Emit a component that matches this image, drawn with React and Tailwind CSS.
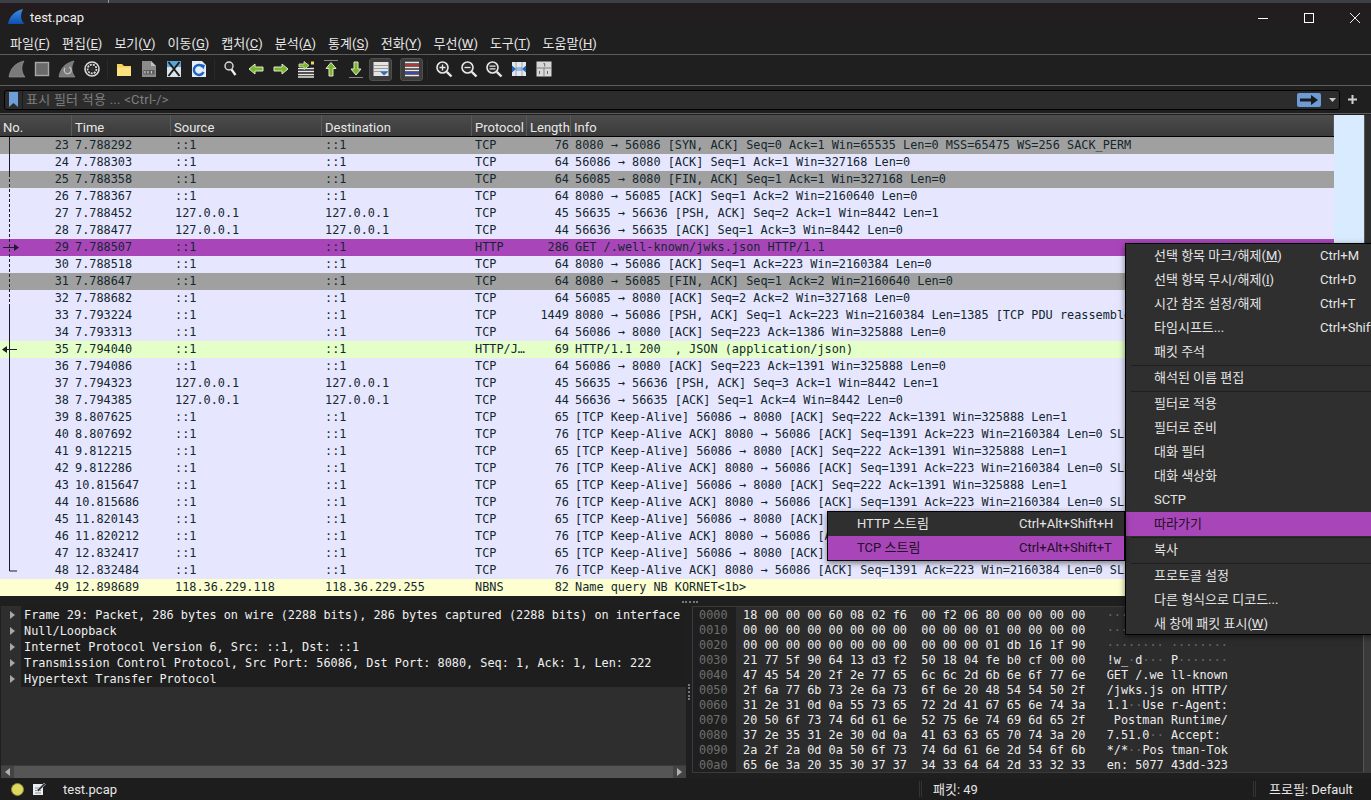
import React from "react";

const TXT = "[font-family:'Roboto','Noto_Sans_CJK_KR',sans-serif]";
const MONO = "[font-family:'DejaVu_Sans_Mono',monospace]";

const K1 = "[TCP Keep-Alive] 56086 → 8080 [ACK] Seq=222 Ack=1391 Win=325888 Len=1";
const K2 = "[TCP Keep-Alive ACK] 8080 → 56086 [ACK] Seq=1391 Ack=223 Win=2160384 Len=0 SLE=222 SRE=223";
const L = "127.0.0.1";
const rows = [
  [23, "7.788292", "::1", "::1", "TCP", 76, "8080 → 56086 [SYN, ACK] Seq=0 Ack=1 Win=65535 Len=0 MSS=65475 WS=256 SACK_PERM", "g"],
  [24, "7.788303", "::1", "::1", "TCP", 64, "56086 → 8080 [ACK] Seq=1 Ack=1 Win=327168 Len=0", "t"],
  [25, "7.788358", "::1", "::1", "TCP", 64, "56085 → 8080 [FIN, ACK] Seq=1 Ack=1 Win=327168 Len=0", "g"],
  [26, "7.788367", "::1", "::1", "TCP", 64, "8080 → 56085 [ACK] Seq=1 Ack=2 Win=2160640 Len=0", "t"],
  [27, "7.788452", L, L, "TCP", 45, "56635 → 56636 [PSH, ACK] Seq=2 Ack=1 Win=8442 Len=1", "t"],
  [28, "7.788477", L, L, "TCP", 44, "56636 → 56635 [ACK] Seq=1 Ack=3 Win=8442 Len=0", "t"],
  [29, "7.788507", "::1", "::1", "HTTP", 286, "GET /.well-known/jwks.json HTTP/1.1", "p"],
  [30, "7.788518", "::1", "::1", "TCP", 64, "8080 → 56086 [ACK] Seq=1 Ack=223 Win=2160384 Len=0", "t"],
  [31, "7.788647", "::1", "::1", "TCP", 64, "8080 → 56085 [FIN, ACK] Seq=1 Ack=2 Win=2160640 Len=0", "g"],
  [32, "7.788682", "::1", "::1", "TCP", 64, "56085 → 8080 [ACK] Seq=2 Ack=2 Win=327168 Len=0", "t"],
  [33, "7.793224", "::1", "::1", "TCP", 1449, "8080 → 56086 [PSH, ACK] Seq=1 Ack=223 Win=2160384 Len=1385 [TCP PDU reassembled in 35]", "t"],
  [34, "7.793313", "::1", "::1", "TCP", 64, "56086 → 8080 [ACK] Seq=223 Ack=1386 Win=325888 Len=0", "t"],
  [35, "7.794040", "::1", "::1", "HTTP/J…", 69, "HTTP/1.1 200  , JSON (application/json)", "h"],
  [36, "7.794086", "::1", "::1", "TCP", 64, "56086 → 8080 [ACK] Seq=223 Ack=1391 Win=325888 Len=0", "t"],
  [37, "7.794323", L, L, "TCP", 45, "56635 → 56636 [PSH, ACK] Seq=3 Ack=1 Win=8442 Len=1", "t"],
  [38, "7.794385", L, L, "TCP", 44, "56636 → 56635 [ACK] Seq=1 Ack=4 Win=8442 Len=0", "t"],
  [39, "8.807625", "::1", "::1", "TCP", 65, K1, "t"],
  [40, "8.807692", "::1", "::1", "TCP", 76, K2, "t"],
  [41, "9.812215", "::1", "::1", "TCP", 65, K1, "t"],
  [42, "9.812286", "::1", "::1", "TCP", 76, K2, "t"],
  [43, "10.815647", "::1", "::1", "TCP", 65, K1, "t"],
  [44, "10.815686", "::1", "::1", "TCP", 76, K2, "t"],
  [45, "11.820143", "::1", "::1", "TCP", 65, K1, "t"],
  [46, "11.820212", "::1", "::1", "TCP", 76, K2, "t"],
  [47, "12.832417", "::1", "::1", "TCP", 65, K1, "t"],
  [48, "12.832484", "::1", "::1", "TCP", 76, K2, "t"],
  [49, "12.898689", "118.36.229.118", "118.36.229.255", "NBNS", 82, "Name query NB KORNET<1b>", "y"],
];

const rowBg = { g: "bg-[#a0a0a0]", t: "bg-[#e7e6ff]", p: "bg-[#a846b9]", h: "bg-[#e4ffc7]", y: "bg-[#feffd0]" };

const hex = [
  ["0000", "18 00 00 00 60 08 02 f6", "00 f2 06 80 00 00 00 00", "········ ········"],
  ["0010", "00 00 00 00 00 00 00 00", "00 00 00 01 00 00 00 00", "········ ········"],
  ["0020", "00 00 00 00 00 00 00 00", "00 00 00 01 db 16 1f 90", "········ ········"],
  ["0030", "21 77 5f 90 64 13 d3 f2", "50 18 04 fe b0 cf 00 00", "!w_·d··· P·······"],
  ["0040", "47 45 54 20 2f 2e 77 65", "6c 6c 2d 6b 6e 6f 77 6e", "GET /.we ll-known"],
  ["0050", "2f 6a 77 6b 73 2e 6a 73", "6f 6e 20 48 54 54 50 2f", "/jwks.js on HTTP/"],
  ["0060", "31 2e 31 0d 0a 55 73 65", "72 2d 41 67 65 6e 74 3a", "1.1··Use r-Agent:"],
  ["0070", "20 50 6f 73 74 6d 61 6e", "52 75 6e 74 69 6d 65 2f", " Postman Runtime/"],
  ["0080", "37 2e 35 31 2e 30 0d 0a", "41 63 63 65 70 74 3a 20", "7.51.0·· Accept: "],
  ["0090", "2a 2f 2a 0d 0a 50 6f 73", "74 6d 61 6e 2d 54 6f 6b", "*/*··Pos tman-Tok"],
  ["00a0", "65 6e 3a 20 35 30 37 37", "34 33 64 64 2d 33 32 33", "en: 5077 43dd-323"],
];

const details = [
  "Frame 29: Packet, 286 bytes on wire (2288 bits), 286 bytes captured (2288 bits) on interface",
  "Null/Loopback",
  "Internet Protocol Version 6, Src: ::1, Dst: ::1",
  "Transmission Control Protocol, Src Port: 56086, Dst Port: 8080, Seq: 1, Ack: 1, Len: 222",
  "Hypertext Transfer Protocol",
];

function Mn({ a, m, b = ")" }) {
  return (
    <span className="whitespace-pre">
      {a}(<span className="underline">{m}</span>{b}
    </span>
  );
}

const menus = [["파일", "F"], ["편집", "E"], ["보기", "V"], ["이동", "G"], ["캡처", "C"], ["분석", "A"], ["통계", "S"], ["전화", "Y"], ["무선", "W"], ["도구", "T"], ["도움말", "H"]];

function Ic({ children }) {
  return (
    <svg width="20" height="20" viewBox="0 0 20 20" fill="none">
      {children}
    </svg>
  );
}

const Fin = ({ fill = "#7a7a7a" }) => <path d="M2 18C3 10 8 4 17 2C14 7 14 13 18 18Z" fill={fill} stroke="#9a9a9a" strokeWidth=".6" />;
const Mag = ({ children }) => (
  <Ic>
    <circle cx="8.5" cy="8.5" r="5.5" fill="#2a2a2a" stroke="#e8e8e8" strokeWidth="1.6" />
    <path d="M12.8 12.8L17.5 17.5" stroke="#e8e8e8" strokeWidth="2.4" />
    {children}
  </Ic>
);

const icons = {
  shark: <Ic><Fin /></Ic>,
  stop: <Ic><rect x="3.5" y="3.5" width="13" height="13" fill="#6a6a6a" stroke="#a8a8a8" strokeWidth="1.4" /></Ic>,
  restart: <Ic><Fin /><path d="M12 8a3.5 3.5 0 1 1-4 1" stroke="#c8c8c8" strokeWidth="1.2" /></Ic>,
  options: <Ic><circle cx="10" cy="10" r="7" fill="#222" stroke="#d8d8d8" strokeWidth="1.6" /><circle cx="10" cy="10" r="4.4" stroke="#d8d8d8" strokeWidth="1.8" strokeDasharray="2 1" /><circle cx="10" cy="10" r="2" fill="#333" /></Ic>,
  folder: <Ic><path d="M3 5h5l2 2h7v10H3Z" fill="#f8cf5a" /><path d="M3 8.5h14v8.5H3Z" fill="#fde07f" /></Ic>,
  file: <Ic><path d="M3 2h9l5 5v11H3Z" fill="#8b8b8b" /><path d="M12 2v5h5Z" fill="#c0c0c0" /><rect x="4.5" y="11" width="11" height="4.5" fill="#5b5b5b" /><path d="M6 12v2.5M9 12v2.5M12.5 12v2.5" stroke="#ccc" strokeWidth="1.2" /></Ic>,
  close: <Ic><path d="M3 2h14v16H3Z" fill="#d8e4ea" /><path d="M3 2h14v6H3Z" fill="#5aa5d6" /><path d="M4.5 3L15.5 17M15.5 3L4.5 17" stroke="#1c1c1c" strokeWidth="2" /></Ic>,
  reload: <Ic><path d="M3 2h10l4 4v12H3Z" fill="#e4ecf4" /><path d="M14 8a5 5 0 1 0 .5 5" stroke="#1b62c4" strokeWidth="2.4" /><path d="M11.5 5l4.5 1-1.5 4.5Z" fill="#1b62c4" /></Ic>,
  search: <Ic><circle cx="8" cy="7" r="4" fill="#2b2b2b" stroke="#ddd" strokeWidth="1.4" /><path d="M10.5 10.5L14.5 16" stroke="#f2f2f2" strokeWidth="2.2" /></Ic>,
  back: <Ic><path d="M3 10l6-5v3h8v4H9v3Z" fill="#76b82a" stroke="#e6e6d0" strokeWidth="1" /></Ic>,
  fwd: <Ic><path d="M17 10l-6-5v3H3v4h8v3Z" fill="#76b82a" stroke="#e6e6d0" strokeWidth="1" /></Ic>,
  goto: <Ic><path d="M2 9.5h16M2 12.5h16M2 15.5h16M2 18h16" stroke="#e8e8e8" strokeWidth="1.3" /><path d="M2 3h12v6H2Z" fill="#222" /><path d="M13 6.5l-5-4V5H3v3h5v2.5Z" fill="#76b82a" stroke="#e6e6d0" strokeWidth=".8" /><rect x="15" y="2.5" width="3" height="3" fill="#f4d95c" /></Ic>,
  top: <Ic><path d="M3 1.5h14" stroke="#888" strokeWidth="1" /><path d="M10 3.5l5 6h-3V17H8V9.5H5Z" fill="#76b82a" stroke="#e6e6d0" strokeWidth="1" /></Ic>,
  bottom: <Ic><path d="M3 18.5h14" stroke="#888" strokeWidth="1" /><path d="M10 16l5-6h-3V3H8v7H5Z" fill="#76b82a" stroke="#e6e6d0" strokeWidth="1" /></Ic>,
  auto: <Ic><rect x="2.5" y="3" width="15" height="14" fill="#e4e4e4" /><path d="M2.5 6.5h15M2.5 9.5h15M2.5 12.5h15" stroke="#888" strokeWidth=".8" /><path d="M9 12.5h8.5L13 16.5Z" fill="#2c6fc0" /></Ic>,
  color: <Ic><path d="M3 3.500h14M3 8.500h14M3 16.500h14" stroke="#ececec" strokeWidth="1.6" /><path d="M3 6h14" stroke="#e03a3a" strokeWidth="1.4" /><path d="M3 11.500h14" stroke="#ececec" strokeWidth="1.4" /><path d="M3 14h14" stroke="#4a4ad8" strokeWidth="1.4" /></Ic>,
  zin: <Mag><path d="M5.5 8.5h6M8.5 5.5v6" stroke="#e8e8e8" strokeWidth="1.3" /></Mag>,
  zout: <Mag><path d="M5.5 8.5h6" stroke="#e8e8e8" strokeWidth="1.3" /></Mag>,
  zreset: <Mag><path d="M5.5 7.2h6M5.5 9.8h6" stroke="#e8e8e8" strokeWidth="1.3" /></Mag>,
  resize: <Ic><rect x="3" y="3" width="14" height="14" fill="#e4e8ee" /><path d="M7 3v14M13 3v14" stroke="#9aa4b0" strokeWidth="1" /><path d="M3 6.5l4 3.5-4 3.5ZM17 6.5l-4 3.5 4 3.5Z" fill="#1f66b8" /><path d="M7 8h6v4H7Z" fill="#1f66b8" opacity=".35" /></Ic>,
  cols: <Ic><rect x="2.5" y="2.5" width="15" height="15" fill="#d8d8d8" /><path d="M2.5 9h15M10 9v8.5" stroke="#808080" strokeWidth="1" /><path d="M9.5 4.5h1.2v3M5.5 12v3M13.5 12v3" stroke="#666" strokeWidth="1" /></Ic>,
};

const Cell = ({ n }) => <div className="w-[25px] h-[24px] flex items-center justify-center">{icons[n]}</div>;
const Sep = () => <div className="w-[7px] h-[20px] flex justify-center"><div className="w-px h-full bg-[#2a2a2a]" /></div>;
const Boxed = ({ n }) => (
  <div className="w-[23px] h-[23px] mx-px flex items-center justify-center bg-[#3d3d3d] border border-[#4f4f4f] rounded-[3px]">{icons[n]}</div>
);

const Div = () => <div className="h-[2px] mx-[5px] border-b border-[#1f1f1f]" />;

function MI({ children, sc, active }) {
  return (
    <div className={`h-[24px] flex items-center pl-[28px] whitespace-pre ${active ? "bg-[#a846b9] text-[#1d0f22]" : ""}`}>
      <span className="w-[166px] shrink-0">{children}</span>
      {sc && <span>{sc}</span>}
    </div>
  );
}

function Dim({ text }) {
  return text.split(/(·+)/).map((s, i) => (
    <span key={i} className={s[0] === "·" ? "text-[#6a6a6a]" : ""}>{s}</span>
  ));
}

const cols = [
  ["No.", "w-[72px]"], ["Time", "w-[99px]"], ["Source", "w-[151px]"], ["Destination", "w-[150px]"],
  ["Protocol", "w-[55px]"], ["Length", "w-[44px]"], ["Info", "flex-1"],
];

export default function App() {
  return (
    <div className={`relative w-[1371px] h-[800px] overflow-hidden flex flex-col bg-[#1f1f1f] text-[#e6e6e6] text-[13px] ${TXT}`}>
      {/* background window sliver */}
      <div className="h-[3px] shrink-0 overflow-hidden bg-[#3a4046] text-[#d8d8d8] text-[12px] leading-[16px]">
        <div className="-mt-[13px] flex whitespace-pre">
          <span className="w-[108px] shrink-0">관계자료부탁</span>
          <span className="w-[11px] border-l border-[#999] shrink-0" />
          <span>오늘의 사이트</span>
        </div>
      </div>
      {/* title bar */}
      <div className="h-[29px] shrink-0 flex items-center bg-gradient-to-b from-[#241c1e] to-[#1f1f1f]">
        <svg className="ml-[8px]" width="17" height="17" viewBox="0 0 17 17">
          <defs>
            <linearGradient id="lg" x1="0" y1="0" x2="0" y2="1">
              <stop offset="0" stopColor="#3f8ee8" />
              <stop offset="1" stopColor="#0d4fb0" />
            </linearGradient>
          </defs>
          <path d="M0 15C1 8 6 2 15 0C12 6 12.5 11 16.5 15Z" fill="url(#lg)" />
        </svg>
        <span className="ml-[5px] text-[#f0f0f0]">test.pcap</span>
        <div className="ml-auto flex items-center pr-[11px]">
          <svg width="10" height="10" viewBox="0 0 10 10" className="mr-[36px]"><path d="M0 5.5h10" stroke="#fff" /></svg>
          <svg width="10" height="10" viewBox="0 0 10 10" className="mr-[36px]"><rect x=".5" y=".5" width="9" height="9" fill="none" stroke="#fff" /></svg>
          <svg width="10" height="10" viewBox="0 0 10 10"><path d="M0 0l10 10M10 0L0 10" stroke="#eee" /></svg>
        </div>
      </div>
      {/* menu */}
      <div className="h-[23px] shrink-0 flex items-center gap-[12px] pl-[10px] pt-px border-b border-[#5c5c5c]">
        {menus.map(([a, m]) => <Mn key={m} a={a} m={m} />)}
      </div>
      {/* toolbar */}
      <div className="h-[31px] shrink-0 flex items-center pl-[4px] pb-[2px] border-b border-[#5c5c5c]">
        <Cell n="shark" /><Cell n="stop" /><Cell n="restart" /><Cell n="options" /><Sep />
        <Cell n="folder" /><Cell n="file" /><Cell n="close" /><Cell n="reload" /><Sep />
        <Cell n="search" /><Cell n="back" /><Cell n="fwd" /><Cell n="goto" /><Cell n="top" /><Cell n="bottom" />
        <Boxed n="auto" /><div className="w-[6px]" /><Boxed n="color" /><Sep />
        <Cell n="zin" /><Cell n="zout" /><Cell n="zreset" /><Cell n="resize" /><Cell n="cols" />
      </div>
      {/* filter */}
      <div className="h-[28px] shrink-0 flex items-center pl-[4px] border-b border-[#5c5c5c]">
        <div className="w-[1336px] h-[20px] flex items-center bg-[#2c2c2c] border border-black rounded-[3px]">
          <svg className="ml-[4px]" width="9" height="15" viewBox="0 0 9 15"><path d="M0 0h9v15L4.5 11 0 15Z" fill="#6f9fd8" /></svg>
          <div className="w-px h-full ml-[4px] bg-[#1a1a1a]" />
          <span className="ml-[3px] text-[#7f7f7f] tracking-[.25px] whitespace-pre">표시 필터 적용 ... &lt;Ctrl-/&gt;</span>
          <div className="ml-auto mr-[18px] w-[24px] h-[14px] rounded-[2px] bg-[#6c9bd6] flex items-center justify-center">
            <svg width="18" height="10" viewBox="0 0 18 10"><path d="M0 3.5h11V0l7 5-7 5V6.5H0Z" fill="#1a1a1a" /></svg>
          </div>
        </div>
        <svg className="ml-[-11px]" width="7" height="4" viewBox="0 0 7 4"><path d="M0 0h7L3.5 4Z" fill="#c8c8c8" /></svg>
        <svg className="ml-[12px]" width="9" height="9" viewBox="0 0 9 9"><path d="M4.5 0v9M0 4.5h9" stroke="#d0d0d0" strokeWidth="2" /></svg>
      </div>
      {/* packet list */}
      <div className="h-[481px] mt-px shrink-0 flex">
        <div className="relative w-[1334px] shrink-0 flex flex-col overflow-hidden">
          <div className="h-[22px] shrink-0 flex items-center bg-gradient-to-b from-[#4c4c4c] to-[#3b3b3b] border-b border-black text-[#e8e8e8]">
            {cols.map(([t, w]) => (
              <div key={t} className={`${w} h-full flex items-center pl-[3px] pt-[4px] border-r border-[#5a5a5a] overflow-hidden whitespace-pre`}>{t}</div>
            ))}
          </div>
          <div className={`flex flex-col text-[11.85px] text-[#12272e] ${MONO}`}>
            {rows.map(([no, t, s, d, p, l, info, k]) => (
              <div key={no} className={`h-[17px] leading-[17px] flex whitespace-pre ${rowBg[k]}`}>
                <div className="w-[72px] pr-[3px] text-right shrink-0">{no}</div>
                <div className="w-[99px] pl-[3px] shrink-0">{t}</div>
                <div className="w-[151px] pl-[4px] shrink-0">{s}</div>
                <div className="w-[150px] pl-[3px] shrink-0">{d}</div>
                <div className="w-[55px] pl-[3px] shrink-0">{p}</div>
                <div className="w-[44px] pr-[2px] text-right shrink-0">{l}</div>
                <div className="flex-1 pl-[4px] overflow-hidden">{info}</div>
              </div>
            ))}
          </div>
          <svg className="absolute left-0 top-[22px]" width="24" height="459" viewBox="0 0 24 459">
            <path d="M9.5 0V37" stroke="#1c1c2a" fill="none" />
            <path d="M9.5 37V170" stroke="#1c1c2a" strokeDasharray="3 2" fill="none" />
            <path d="M9.5 170V434H17" stroke="#1c1c2a" fill="none" />
            <path d="M3 110.5H15" stroke="#1c1c2a" fill="none" />
            <path d="M14 107l5 3.5-5 3.5Z" fill="#1c1c2a" />
            <path d="M7 212.5H17" stroke="#1c1c2a" fill="none" />
            <path d="M7 209l-5 3.5 5 3.5Z" fill="#1c1c2a" />
          </svg>
        </div>
        <div className="w-[30px] bg-[#d8ebff] shrink-0" />
        <div className="flex-1 bg-[#2e2e2e] border-l border-[#555]" />
      </div>
      {/* splitter */}
      <div className="h-[10px] shrink-0 flex justify-center items-start pt-[5px] pl-[9px]">
        <div className="w-[16px] h-[2px] border-t-2 border-dotted border-[#777]" />
      </div>
      {/* bottom panes */}
      <div className="h-[172px] shrink-0 flex">
        <div className="w-[686px] shrink-0 flex flex-col pl-px">
          <div className="h-[159px] flex bg-[#2e2e2e]">
            <div className="w-[20px] shrink-0 flex flex-col pt-px">
              {details.map((d) => (
                <div key={d} className="h-[16px] pl-[9px] flex items-center">
                  <svg width="5" height="8" viewBox="0 0 5 8"><path d="M0 0l5 4-5 4Z" fill="#a8a8a8" /></svg>
                </div>
              ))}
            </div>
            <div className={`w-[665px] h-[81px] bg-[#1e1e1e] pl-[3px] pt-px text-[11.85px] text-[#efefef] ${MONO}`}>
              {details.map((d) => <div key={d} className="h-[16px] leading-[16px] whitespace-pre overflow-hidden">{d}</div>)}
            </div>
          </div>
          <div className="h-[13px] flex bg-[#555] border-t border-[#3a3a3a]">
            <div className="w-[13px] bg-[#444] flex items-center justify-center">
              <svg width="5" height="8" viewBox="0 0 5 8"><path d="M5 0L0 4l5 4Z" fill="#b0b0b0" /></svg>
            </div>
            <div className="flex-1" />
            <div className="w-[13px] bg-[#444] flex items-center justify-center">
              <svg width="5" height="8" viewBox="0 0 5 8"><path d="M0 0l5 4-5 4Z" fill="#b0b0b0" /></svg>
            </div>
          </div>
        </div>
        <div className="w-[6px] shrink-0 flex items-center justify-center">
          <div className="w-[2px] h-[16px] border-l-2 border-dotted border-[#777]" />
        </div>
        <div className={`flex-1 flex h-[167px] border border-[#3a3a3a] text-[11.85px] ${MONO}`}>
          <div className="w-[43px] shrink-0 pl-[6px] pt-[1px] bg-[#1f1f1f] text-[#6f6f6f]">
            {hex.map((r) => <div key={r[0]} className="h-[15px] leading-[15px]">{r[0]}</div>)}
          </div>
          <div className="flex-1 bg-[#2c2c2c] pt-[1px] pl-[7px] text-[#ececec]">
            {hex.map((r) => (
              <div key={r[0]} className="h-[15px] leading-[15px] whitespace-pre">
                {r[1]}  {r[2]}   <Dim text={r[3]} />
              </div>
            ))}
          </div>
          <div className="w-[7px] bg-[#3a3a3a] border-l border-[#555]" />
        </div>
      </div>
      {/* status bar */}
      <div className="h-[22px] shrink-0 flex items-center bg-[#1d1d1d]">
        <div className="ml-[11px] w-[13px] h-[13px] rounded-full bg-[#dcd860] border border-[#8d8a3a]" />
        <svg className="ml-[8px]" width="14" height="14" viewBox="0 0 14 14">
          <rect x="1" y="2" width="10" height="11" fill="#e8eef4" />
          <path d="M3 6h6M3 8.5h6M3 11h6" stroke="#8a8f96" />
          <path d="M5 8L12 1l1.5 1.5L6.5 9.5Z" fill="#3a3a3a" stroke="#cfcfcf" strokeWidth=".5" />
        </svg>
        <span className="ml-[17px] pt-[2px]">test.pcap</span>
        <div className="ml-auto flex items-center h-full">
          <div className="w-[3px] h-[16px] border-x border-[#333]" />
          <span className="w-[331px] pl-[11px] pt-[2px]">패킷: 49</span>
          <div className="w-[3px] h-[16px] border-x border-[#333]" />
          <span className="w-[115px] pl-[13px] pt-[2px] whitespace-pre">프로필: Default</span>
        </div>
      </div>

      {/* context menu */}
      <div className="absolute left-[1125px] top-[243px] w-[260px] h-[392px] overflow-hidden bg-[#2f2f2f] border border-black text-[#e4e4e4] shadow-[0_2px_6px_rgba(0,0,0,.5)]">
        <MI sc="Ctrl+M"><Mn a="선택 항목 마크/해제" m="M" /></MI>
        <MI sc="Ctrl+D"><Mn a="선택 항목 무시/해제" m="I" /></MI>
        <MI sc="Ctrl+T">시간 참조 설정/해제</MI>
        <MI sc="Ctrl+Shift+T">타임시프트...</MI>
        <MI>패킷 주석</MI>
        <Div />
        <MI>해석된 이름 편집</MI>
        <Div />
        <MI>필터로 적용</MI>
        <MI>필터로 준비</MI>
        <MI>대화 필터</MI>
        <MI>대화 색상화</MI>
        <MI>SCTP</MI>
        <MI active>따라가기</MI>
        <Div />
        <MI>복사</MI>
        <Div />
        <MI>프로토콜 설정</MI>
        <MI>다른 형식으로 디코드...</MI>
        <MI><Mn a="새 창에 패킷 표시" m="W" /></MI>
      </div>
      {/* submenu */}
      <div className="absolute left-[827px] top-[511px] w-[298px] bg-[#2f2f2f] border border-black text-[#e4e4e4] shadow-[0_2px_6px_rgba(0,0,0,.5)]">
        <div className="h-[24px] flex items-center pl-[29px]"><span className="w-[162px]">HTTP 스트림</span><span>Ctrl+Alt+Shift+H</span></div>
        <div className="h-[24px] flex items-center pl-[29px] bg-[#a846b9] text-[#1d0f22]"><span className="w-[162px]">TCP 스트림</span><span>Ctrl+Alt+Shift+T</span></div>
      </div>
    </div>
  );
}
